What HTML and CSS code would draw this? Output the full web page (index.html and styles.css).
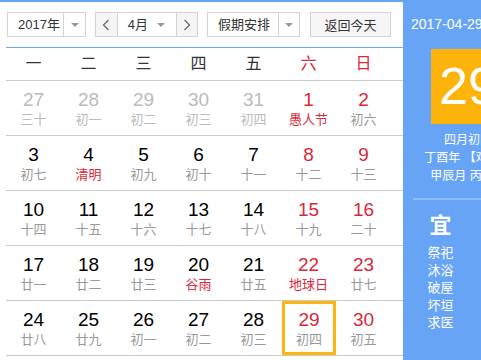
FILE: index.html
```html
<!DOCTYPE html>
<html>
<head>
    <title>万年历</title>
    <link rel="stylesheet" href="styles.css">
</head>
<body>
    <div class="calendar">
        <div class="main">
            <div class="toolbar">
                <div class="select year">
                    <span class="select-text">2017年</span>
                    <span class="select-arrow"><i class="caret"></i></span>
                </div>
                <div class="select month">
                    <span class="nav-btn">
                        <svg width="8" height="12" viewBox="0 0 8 12"><polyline points="6.5,1 1.5,6 6.5,11" fill="none" stroke="#666" stroke-width="1.2"/></svg>
                    </span>
                    <span class="select-text">4月</span>
                    <span class="month-arrow"><i class="caret"></i></span>
                    <span class="nav-btn right">
                        <svg width="8" height="12" viewBox="0 0 8 12"><polyline points="1.5,1 6.5,6 1.5,11" fill="none" stroke="#666" stroke-width="1.2"/></svg>
                    </span>
                </div>
                <div class="select holiday">
                    <span class="select-text">假期安排</span>
                    <span class="select-arrow"><i class="caret"></i></span>
                </div>
                <button class="today-btn">返回今天</button>
            </div>

            <div class="week-head">
                <span>一</span><span>二</span><span>三</span><span>四</span><span>五</span>
                <span class="red">六</span><span class="red">日</span>
            </div>

            <div class="week">
                <div class="day other"><b>27</b><em>三十</em></div>
                <div class="day other"><b>28</b><em>初一</em></div>
                <div class="day other"><b>29</b><em>初二</em></div>
                <div class="day other"><b>30</b><em>初三</em></div>
                <div class="day other"><b>31</b><em>初四</em></div>
                <div class="day weekend fest"><b>1</b><em>愚人节</em></div>
                <div class="day weekend"><b>2</b><em>初六</em></div>
            </div>
            <div class="week">
                <div class="day"><b>3</b><em>初七</em></div>
                <div class="day fest"><b>4</b><em>清明</em></div>
                <div class="day"><b>5</b><em>初九</em></div>
                <div class="day"><b>6</b><em>初十</em></div>
                <div class="day"><b>7</b><em>十一</em></div>
                <div class="day weekend"><b>8</b><em>十二</em></div>
                <div class="day weekend"><b>9</b><em>十三</em></div>
            </div>
            <div class="week">
                <div class="day"><b>10</b><em>十四</em></div>
                <div class="day"><b>11</b><em>十五</em></div>
                <div class="day"><b>12</b><em>十六</em></div>
                <div class="day"><b>13</b><em>十七</em></div>
                <div class="day"><b>14</b><em>十八</em></div>
                <div class="day weekend"><b>15</b><em>十九</em></div>
                <div class="day weekend"><b>16</b><em>二十</em></div>
            </div>
            <div class="week">
                <div class="day"><b>17</b><em>廿一</em></div>
                <div class="day"><b>18</b><em>廿二</em></div>
                <div class="day"><b>19</b><em>廿三</em></div>
                <div class="day fest"><b>20</b><em>谷雨</em></div>
                <div class="day"><b>21</b><em>廿五</em></div>
                <div class="day weekend fest"><b>22</b><em>地球日</em></div>
                <div class="day weekend"><b>23</b><em>廿七</em></div>
            </div>
            <div class="week">
                <div class="day"><b>24</b><em>廿八</em></div>
                <div class="day"><b>25</b><em>廿九</em></div>
                <div class="day"><b>26</b><em>初一</em></div>
                <div class="day"><b>27</b><em>初二</em></div>
                <div class="day"><b>28</b><em>初三</em></div>
                <div class="day weekend today"><b>29</b><em>初四</em></div>
                <div class="day weekend"><b>30</b><em>初五</em></div>
            </div>
        </div>

        <div class="side">
            <div class="side-date">2017-04-29</div>
            <div class="big-day">29</div>
            <div class="lunar-info">
                <p>四月初四</p>
                <p>丁酉年 【鸡年】</p>
                <p>甲辰月 丙午日</p>
            </div>
            <div class="almanac">
                <div class="almanac-col">
                    <h3>宜</h3>
                    <p>祭祀</p>
                    <p>沐浴</p>
                    <p>破屋</p>
                    <p>坏垣</p>
                    <p>求医</p>
                </div>
            </div>
        </div>
    </div>
</body>
</html>
```

FILE: styles.css
```css
body {
    margin: 0;
    overflow: hidden;
    background-color: #fff;
    font-family: "Liberation Sans", "Noto Sans CJK SC", sans-serif;
    color: #333;
}

.calendar {
    display: flex;
    width: 540px;
    height: 360px;
    border-top: 2px solid #67a4f6;
}

.main {
    width: 403px;
    flex-shrink: 0;
}

/* toolbar */
.toolbar {
    display: flex;
    margin: 10px 0 0 7px;
    height: 25px;
}

.select {
    display: flex;
    height: 25px;
    box-sizing: border-box;
    border: 1px solid #d3d3d3;
    background-color: #fff;
    font-size: 13px;
    line-height: 23px;
}

.select-text {
    padding-left: 10px;
}

.year {
    width: 79px;
}

.year .select-text {
    width: 45px;
}

.holiday {
    width: 93px;
    margin-left: 9px;
}

.holiday .select-text {
    width: 60px;
}

.select-arrow {
    display: flex;
    align-items: center;
    justify-content: center;
    flex: 1;
    border-left: 1px solid #d3d3d3;
}

.caret {
    width: 0;
    height: 0;
    border-left: 4px solid transparent;
    border-right: 4px solid transparent;
    border-top: 4px solid #999;
}

.month {
    width: 103px;
    margin-left: 9px;
}

.month .select-text {
    width: 30px;
}

.month-arrow {
    display: flex;
    align-items: center;
    width: 19px;
}

.nav-btn {
    display: flex;
    align-items: center;
    justify-content: center;
    width: 21px;
    background-color: #f5f5f5;
    border-right: 1px solid #d3d3d3;
}

.nav-btn.right {
    width: 20px;
    border-right: none;
    border-left: 1px solid #d3d3d3;
}

.today-btn {
    width: 81px;
    height: 25px;
    margin-left: 10px;
    padding: 0;
    border: 1px solid #d3d3d3;
    background-color: #f6f6f6;
    font-family: "Liberation Sans", "Noto Sans CJK SC", sans-serif;
    font-size: 13px;
    color: #333;
}

/* grid */
.week-head {
    display: grid;
    grid-template-columns: repeat(7, 55px);
    margin: 10px 0 0 6px;
    border-top: 1px solid #6aa6f5;
    border-bottom: 1px solid #ccc;
    height: 34px;
    box-sizing: border-box;
    font-size: 16px;
    line-height: 32px;
    text-align: center;
    color: #333;
}

.week {
    display: grid;
    grid-template-columns: repeat(7, 55px);
    margin-left: 6px;
    height: 55px;
    box-sizing: border-box;
    border-bottom: 1px solid #ccc;
}

.day {
    text-align: center;
    padding-top: 8px;
    box-sizing: border-box;
}

.day b {
    display: block;
    font-weight: normal;
    font-size: 19px;
    line-height: 22px;
    color: #000;
}

.day em {
    display: block;
    font-style: normal;
    font-size: 13px;
    line-height: 18px;
    color: #999;
}

.red,
.weekend b,
.fest em {
    color: #d8283a !important;
}

.other b,
.other em {
    color: #bbb;
}

.today {
    border: 3px solid #fbb511;
    margin-left: 1px;
    padding-top: 5px;
    height: 54px;
}

/* side panel */
.side {
    width: 137px;
    flex-shrink: 0;
    background-color: #67a4f6;
    color: #fff;
    text-align: center;
}

.side-date {
    margin-top: 14px;
    padding-left: 8px;
    text-align: left;
    font-size: 14px;
    line-height: 16px;
}

.big-day {
    width: 74px;
    height: 75px;
    margin: 17px 0 0 28px;
    background-color: #fcb40a;
    font-size: 52px;
    line-height: 75px;
    text-align: left;
    padding-left: 8px;
    box-sizing: border-box;
}

.lunar-info {
    margin-top: 7px;
    width: 130px;
    font-size: 12px;
    line-height: 18px;
}

.lunar-info p {
    margin: 0;
}

.almanac {
    display: flex;
    margin: 13px 0 0 10px;
    width: 110px;
    border-top: 2px solid #8fbcf8;
}

.almanac-col {
    width: 55px;
}

.almanac-col h3 {
    margin: 14px 0 6px;
    font-size: 22px;
    line-height: 24px;
}

.almanac-col p {
    margin: 0;
    font-size: 13px;
    line-height: 17.5px;
}
```
